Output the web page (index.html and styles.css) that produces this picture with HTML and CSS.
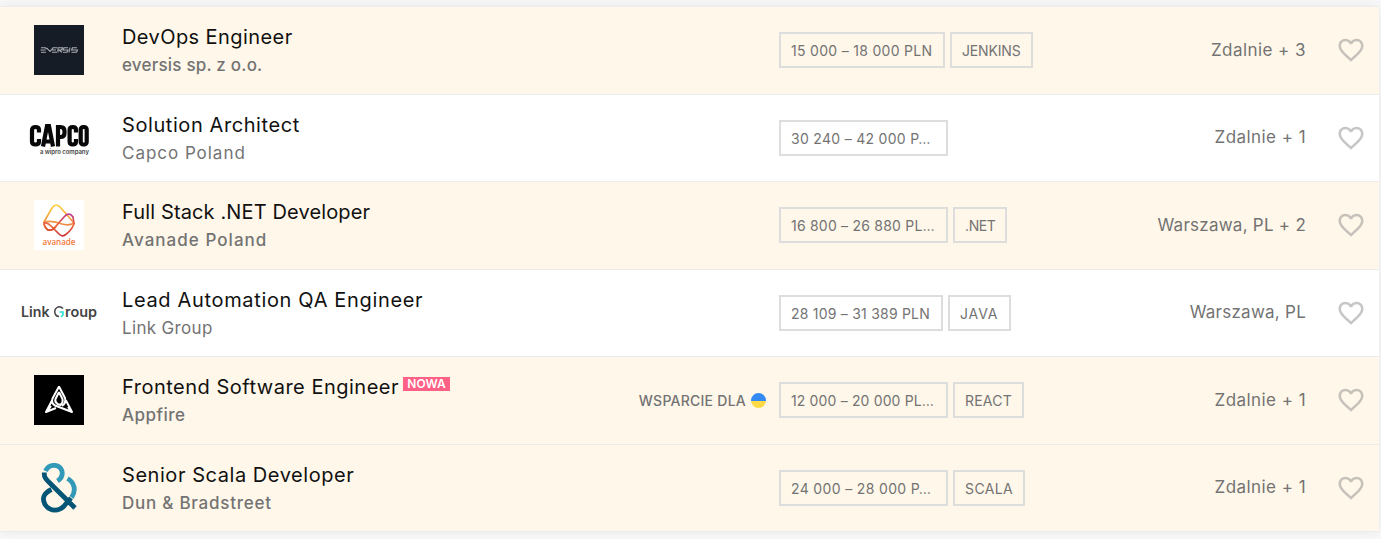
FILE: index.html
```
<!DOCTYPE html>
<html lang="pl">
<head>
<meta charset="utf-8">
<title>Oferty pracy</title>
<link rel="stylesheet" href="styles.css">
</head>
<body>
<svg class="defs" aria-hidden="true"><symbol id="heart" viewBox="0 0 24 24"><path d="M16.5 3c-1.74 0-3.41.81-4.5 2.09C10.91 3.81 9.24 3 7.5 3 4.42 3 2 5.42 2 8.5c0 3.78 3.4 6.86 8.55 11.54L12 21.35l1.45-1.32C18.6 15.36 22 12.28 22 8.5 22 5.42 19.58 3 16.5 3zm-4.4 15.55l-.1.1-.1-.1C7.14 14.24 4 11.39 4 8.5 4 6.5 5.5 5 7.5 5c1.54 0 3.04.99 3.57 2.36h1.87C13.46 5.99 14.96 5 16.5 5c2 0 3.5 1.5 3.5 3.5 0 2.89-3.14 5.74-7.9 10.05z"/></symbol></svg>
<main class="list">
  <a class="row tinted devops">
    <span class="logo"><svg width="50" height="50" viewBox="0 0 50 50"><path fill="#151c26" d="M0 0h50v50H0z"/><g fill="none" stroke="#a9acb2" stroke-width="1.100"><path d="M7 22.800h4.500l1 1.200M6.500 25h5M7 27.200h5M12.500 22.800l3.500 3.700 3-3.700h4M18 25h4M18 27.200h5M24 27.500v-4.700h4.500l-1 2.200H25l3 2.200M34 22.800h-4l-1 2.200h5l-1 2.200h-4M36 22.500l-1 5M43 22.800h-4.500l-1 2.200h6l-1 2.200h-5"/></g></svg></span>
    <span class="info"><span class="title"><span>DevOps Engineer</span></span><span class="company">eversis sp. z o.o.</span></span>
    <span class="support"></span>
    <span class="tags"><span class="tag pay">15 000 – 18 000 PLN</span><span class="tag tech">JENKINS</span></span>
    <span class="place">Zdalnie + 3</span>
    <svg class="heart"><use href="#heart"/></svg>
  </a>
  <a class="row architect">
    <span class="logo"><svg width="64" height="50" viewBox="0 0 64 50"><g fill="none" stroke="#080808" stroke-width="4.200"><path d="M12 19.500V17q0-3-3.500-3T5 17v11.500q0 3 3.500 3t3.500-3V26"/><path d="M16 33.500l4-20.500h2l4 20.500M17.500 28.500h7"/><path d="M31 33.500V14h2.500q4 0 4 4v2q0 4-4 4h-2"/><path d="M49 19.500V17q0-3-3.200-3t-3.200 3v11.500q0 3 3.200 3t3.200-3V26"/><rect x="53.700" y="14" width="6" height="17.500" rx="2.500"/></g><text class="capco-sub" x="13" y="41">a wipro company</text></svg></span>
    <span class="info"><span class="title"><span>Solution Architect</span></span><span class="company">Capco Poland</span></span>
    <span class="support"></span>
    <span class="tags"><span class="tag pay">30 240 – 42 000 P…</span></span>
    <span class="place">Zdalnie + 1</span>
    <svg class="heart"><use href="#heart"/></svg>
  </a>
  <a class="row tinted dotnet">
    <span class="logo"><svg width="50" height="50" viewBox="0 0 50 50"><defs><linearGradient id="yo" x1="0" y1="0" x2="0" y2="1"><stop stop-color="#fbd23c"/><stop offset="1" stop-color="#ee7548"/></linearGradient><linearGradient id="pr" x1="0" y1="0" x2="0" y2="1"><stop stop-color="#b92f88"/><stop offset=".5" stop-color="#ef6a35"/><stop offset="1" stop-color="#c93035"/></linearGradient></defs><path fill="#fff" d="M0 0h50v50H0z"/><g fill="none" stroke-width="1.700"><path stroke="url(#yo)" d="M10 22L18 8q4-6 9 0l13 15q-5 3-12 1-10-4-18-2 0 5 4 8 5 1 8-4"/><path stroke="url(#pr)" d="M14 30q5 1 9-5l7-8q5-6 9 0l1 7q-3 7-9 11-3 2-6-1l-8-8q-4-4-7-3 0 4 4 7z"/></g><text class="avanade" x="8.500" y="45" textLength="33" lengthAdjust="spacingAndGlyphs">avanade</text></svg></span>
    <span class="info"><span class="title"><span>Full Stack .NET Developer</span></span><span class="company">Avanade Poland</span></span>
    <span class="support"></span>
    <span class="tags"><span class="tag pay">16 800 – 26 880 PL…</span><span class="tag tech">.NET</span></span>
    <span class="place">Warszawa, PL + 2</span>
    <svg class="heart"><use href="#heart"/></svg>
  </a>
  <a class="row automation">
    <span class="logo"><svg width="78" height="30" viewBox="0 0 78 30"><text class="linkgroup" x="1" y="19" textLength="28.500" lengthAdjust="spacingAndGlyphs">Link</text><path d="M43 10.500Q40 7.500 37 9.500t-2 6q1 3 4 3" fill="none" stroke="#444" stroke-width="1.500"/><path d="M39.500 14H43v3l-2 2" fill="none" stroke="#25e0dc" stroke-width="1.600"/><text class="linkgroup" x="45" y="19" textLength="32" lengthAdjust="spacingAndGlyphs">roup</text></svg></span>
    <span class="info"><span class="title"><span>Lead Automation QA Engineer</span></span><span class="company">Link Group</span></span>
    <span class="support"></span>
    <span class="tags"><span class="tag pay">28 109 – 31 389 PLN</span><span class="tag tech">JAVA</span></span>
    <span class="place">Warszawa, PL</span>
    <svg class="heart"><use href="#heart"/></svg>
  </a>
  <a class="row tinted frontend">
    <span class="logo"><svg width="50" height="50" viewBox="0 0 50 50"><path d="M0 0h50v50H0z"/><g fill="none" stroke="#fff" stroke-width="2" stroke-linejoin="round"><path d="M25 11.500l-6.500 12q-1.500 5 2.500 7l17 6.500-6-11.500M25 11.500l6 11.500q1.500 5-3 8M18 25.500L12 37l10-4M25 17l-3.500 7q-1 3 2 5l3 1q3-3 2-6L25 17M17 31l-3.500 5M34 32l2.500 3.500"/></g></svg></span>
    <span class="info"><span class="title"><span>Frontend Software Engineer</span><span class="new">NOWA</span></span><span class="company">Appfire</span></span>
    <span class="support"><span>WSPARCIE DLA</span><i class="flag"></i></span>
    <span class="tags"><span class="tag pay">12 000 – 20 000 PL…</span><span class="tag tech">REACT</span></span>
    <span class="place">Zdalnie + 1</span>
    <svg class="heart"><use href="#heart"/></svg>
  </a>
  <a class="row tinted scala">
    <span class="logo"><svg width="36" height="50" viewBox="0 0 36 50"><g fill="none" stroke-width="4.800"><path stroke="#3299b9" d="M4.500 8C8 .5 18 .5 20.800 7.500c1.500 5-.5 8-4.300 10.500M26.500 15.500c7 4 9 12 4 19"/><path stroke="#055577" d="M10.500 26.500C3 30 .5 35 4 41.500c5 7.500 14.500 7 19.500 1l6.500-7.500M3.300 9.500v2c0 4 3 6 6 9L34 45"/></g></svg></span>
    <span class="info"><span class="title"><span>Senior Scala Developer</span></span><span class="company">Dun &amp; Bradstreet</span></span>
    <span class="support"></span>
    <span class="tags"><span class="tag pay">24 000 – 28 000 P…</span><span class="tag tech">SCALA</span></span>
    <span class="place">Zdalnie + 1</span>
    <svg class="heart"><use href="#heart"/></svg>
  </a>
</main>
</body>
</html>
```
FILE: styles.css
```
* { box-sizing: border-box; }
body { margin: 0; padding-top: 6px; height: 539px; overflow: hidden; background: #f9f9f9; font-family: Inter, "Noto Sans", sans-serif; color: #737373; }
.defs { display: none; }
.list { width: 1379px; border-top: 1px solid #ececec; background: #fff; box-shadow: 0 0 12px rgba(0, 0, 0, .08); }
.row { display: grid; grid-template-columns: 118px 450px 198px 270px 270px 75px; align-items: center; height: 87.5px; border-bottom: 1px solid #ececec; white-space: nowrap; }
.row:last-child { height: 87px; }
.tinted { background: #fff7e9; }
.logo { display: flex; justify-content: center; align-items: center; }
.logo svg { display: block; }
.info { display: flex; flex-direction: column; padding: 2px 0 0 4px; line-height: 28px; }
.title { display: flex; color: #111; font-size: 20px; }
.company { font-size: 17px; }
.tinted .company { font-weight: 500; }
.new { width: 47px; height: 14px; margin: 4px 0 0 4px; background: #ff6085; color: #fff; font-size: 12px; font-weight: 600; letter-spacing: 0; line-height: 14px; text-align: center; }
.support { display: flex; justify-content: flex-end; align-items: center; gap: 5px; font-size: 14px; font-weight: 500; letter-spacing: .25px; }
.flag { width: 15px; height: 15px; border-radius: 50%; background: linear-gradient(#338af3 50%, #ffda44 50%); }
.tags { display: flex; gap: 5px; padding-left: 13px; }
.tag { height: 36px; padding-left: 10px; border: 2px solid #ddd; font-size: 14px; line-height: 33px; }
.pay { width: 169px; letter-spacing: .3px; }
.place { padding-bottom: 1px; text-align: right; font-size: 17px; letter-spacing: .45px; }
.heart { width: 30px; height: 30px; margin-left: 30px; fill: #8e8e8e; opacity: .5; }

.devops .title { letter-spacing: .42px; }
.devops .company { letter-spacing: .2px; }
.devops .pay { width: 166px; }
.devops .tech { width: 83px; letter-spacing: -.15px; }

.architect .title { letter-spacing: .58px; }
.architect .company { letter-spacing: .97px; }

.dotnet .title { letter-spacing: .13px; }
.dotnet .company { letter-spacing: 1.04px; }
.dotnet .pay { letter-spacing: .22px; }
.dotnet .tech { width: 54px; letter-spacing: -.4px; }
.dotnet .place { letter-spacing: .25px; }

.automation .title { letter-spacing: .66px; }
.automation .company { letter-spacing: .34px; }
.automation .pay { width: 164px; letter-spacing: .22px; }
.automation .tech { width: 63px; letter-spacing: .9px; }
.automation .place { letter-spacing: .25px; }

.frontend .title > span:first-child { letter-spacing: .5px; }
.frontend .company { letter-spacing: .5px; }
.frontend .pay { letter-spacing: .15px; }
.frontend .tech { width: 71px; letter-spacing: .2px; }

.scala .title { letter-spacing: .55px; }
.scala .company { letter-spacing: .75px; }
.scala .pay { letter-spacing: .35px; }
.scala .tech { width: 72px; letter-spacing: .4px; }

.capco-sub { font: 600 6px Inter, sans-serif; letter-spacing: -.05px; fill: #444; }
.avanade { font: 600 9px "Open Sans", sans-serif; fill: #f27a3d; }
.linkgroup { font: 600 14px Inter, sans-serif; fill: #444; }
```
